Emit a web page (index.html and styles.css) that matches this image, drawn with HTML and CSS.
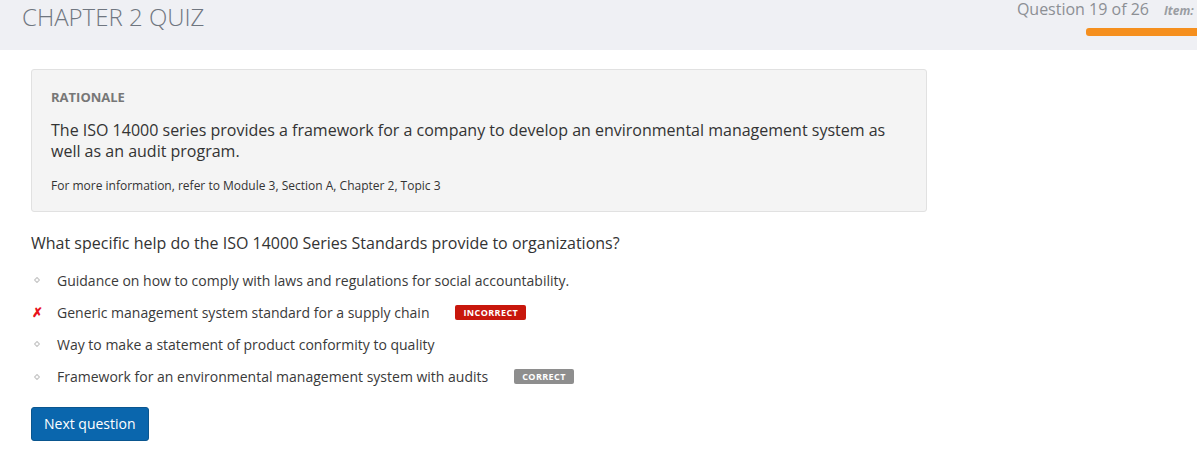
FILE: index.html
```html
<!DOCTYPE html>
<html>
<head>
<meta charset="utf-8">
<link rel="stylesheet" href="styles.css">
</head>
<body>
<header class="topbar">
  <h1 class="title">CHAPTER 2 QUIZ</h1>
  <div class="progress">
    <div class="progress-text"><span class="qcount">Question 19 of 26</span><span class="item">Item:</span></div>
    <div class="bar"></div>
  </div>
</header>
<main class="content">
  <section class="rationale">
    <div class="rat-label">RATIONALE</div>
    <p class="rat-body">The ISO 14000 series provides a framework for a company to develop an environmental management system as well as an audit program.</p>
    <p class="rat-ref">For more information, refer to Module 3, Section A, Chapter 2, Topic 3</p>
  </section>
  <h2 class="question">What specific help do the ISO 14000 Series Standards provide to organizations?</h2>
  <ul class="options">
    <li class="option"><span class="mark"><svg width="6" height="6" viewBox="0 0 6 6"><path d="M3 0.5 L5.5 3 L3 5.5 L0.5 3 Z" fill="none" stroke="#c8c8c8" stroke-width="1.2"/></svg></span><span>Guidance on how to comply with laws and regulations for social accountability.</span></li>
    <li class="option"><span class="mark wrong">&#x2717;</span><span>Generic management system standard for a supply chain</span><span class="badge badge-incorrect">INCORRECT</span></li>
    <li class="option"><span class="mark"><svg width="6" height="6" viewBox="0 0 6 6"><path d="M3 0.5 L5.5 3 L3 5.5 L0.5 3 Z" fill="none" stroke="#c8c8c8" stroke-width="1.2"/></svg></span><span>Way to make a statement of product conformity to quality</span></li>
    <li class="option"><span class="mark"><svg width="6" height="6" viewBox="0 0 6 6"><path d="M3 0.5 L5.5 3 L3 5.5 L0.5 3 Z" fill="none" stroke="#c8c8c8" stroke-width="1.2"/></svg></span><span>Framework for an environmental management system with audits</span><span class="badge badge-correct">CORRECT</span></li>
  </ul>
  <button class="next">Next question</button>
</main>
</body>
</html>
```
FILE: styles.css
```css
* { box-sizing: border-box; }
html, body { margin: 0; padding: 0; }
body {
  font-family: "Open Sans", "Liberation Sans", sans-serif;
  color: #333;
  background: #fff;
  width: 1197px;
  overflow: hidden;
}
.topbar {
  height: 50px;
  background: #eff0f4;
  display: flex;
  justify-content: space-between;
  align-items: flex-start;
  padding-left: 22px;
}
.title {
  margin: 0;
  font-weight: 300;
  font-size: 24px;
  color: #6f7680;
  line-height: 33px;
}
.progress {
  display: flex;
  flex-direction: column;
  align-items: flex-end;
}
.progress-text {
  display: flex;
  align-items: baseline;
  gap: 15px;
  line-height: 20px;
  margin-top: -1px;
}
.qcount {
  font-size: 16px;
  color: #8c8f94;
}
.item {
  font-size: 12px;
  font-weight: 700;
  font-style: italic;
  color: #9a9da2;
  width: 33px;
  overflow: hidden;
  white-space: nowrap;
}
.bar {
  width: 111px;
  height: 8px;
  background: #f58f1e;
  border-radius: 3px 0 0 3px;
  margin-top: 7px;
}
.content {
  padding: 19px 31px 0;
}
.rationale {
  width: 896px;
  background: #f4f4f4;
  border: 1px solid #e1e1e1;
  border-radius: 3px;
  padding: 19px 19px 17px;
}
.rat-label {
  font-size: 13px;
  font-weight: 700;
  color: #777;
  line-height: 17px;
}
.rat-body {
  margin: 14px 0 0;
  font-size: 16px;
  line-height: 21px;
  color: #333;
}
.rat-ref {
  margin: 15px 0 0;
  font-size: 12px;
  line-height: 17px;
  color: #333;
}
.question {
  margin: 19px 0 0;
  font-size: 16px;
  font-weight: 400;
  line-height: 24px;
  color: #333;
}
.options {
  list-style: none;
  margin: 9px 0 0;
  padding: 0;
  display: flex;
  flex-direction: column;
}
.option {
  display: flex;
  align-items: center;
  height: 32.2px;
  font-size: 14px;
  color: #3a3a3a;
}
.mark {
  width: 26px;
  display: flex;
  align-items: center;
  padding-left: 3px;
}
.mark.wrong {
  color: #e8121b;
  font-size: 13px;
  font-weight: 700;
  padding-left: 1px;
}
.badge {
  margin-left: 26px;
  font-size: 9px;
  font-weight: 700;
  letter-spacing: 0.4px;
  color: #fff;
  line-height: 15px;
  height: 15px;
  padding: 0 8px;
  border-radius: 2px;
}
.badge-incorrect { background: #c8170c; }
.badge-correct { background: #8e8e8e; }
.next {
  margin-top: 14px;
  font-family: "Open Sans", "Liberation Sans", sans-serif;
  font-size: 14px;
  color: #fff;
  background: #0a66ad;
  border: 1px solid #0a568f;
  border-radius: 3px;
  height: 34px;
  padding: 0 12px;
  cursor: pointer;
}
```
